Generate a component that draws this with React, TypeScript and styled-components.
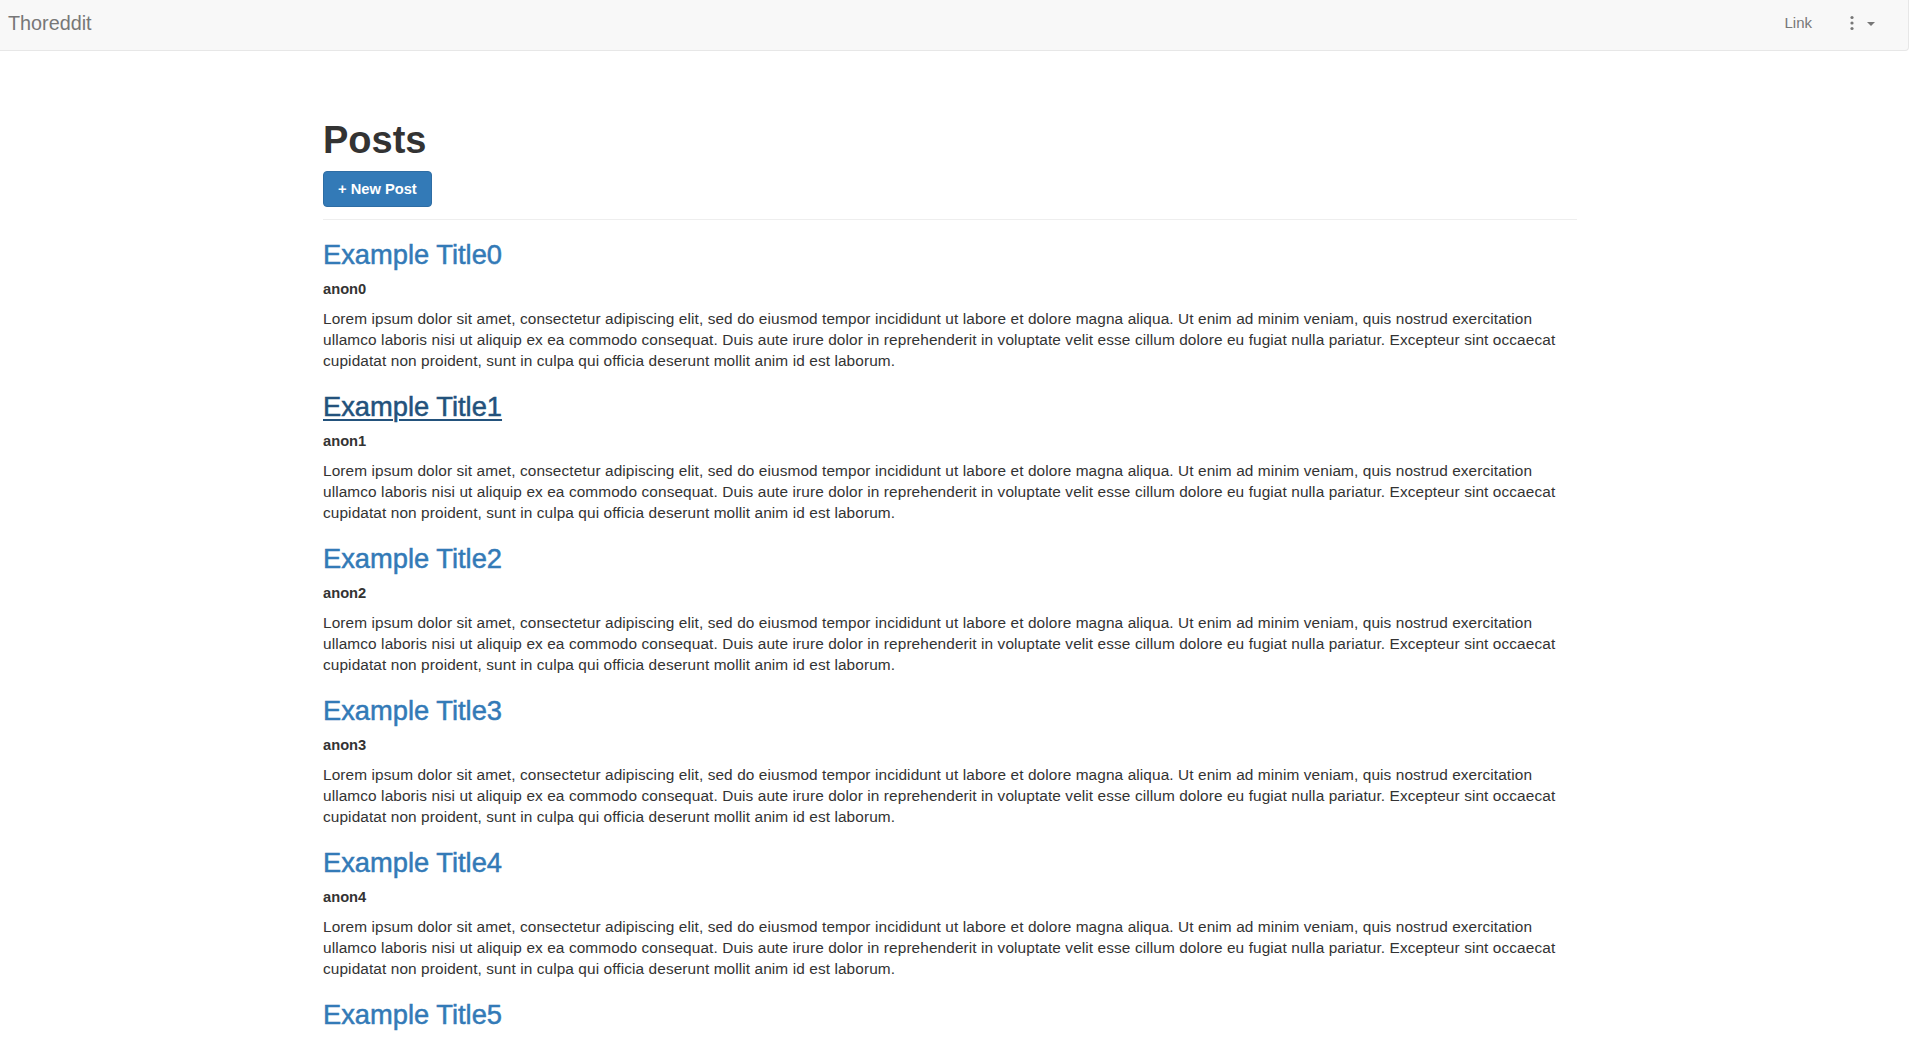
import React from "react";
import styled, { createGlobalStyle } from "styled-components";

const GlobalStyle = createGlobalStyle`
  html { scrollbar-width: none; }
  html::-webkit-scrollbar { display: none; }
  body {
    margin: 0;
    background: #fff;
    color: #333;
    font-family: "Liberation Sans", Helvetica, Arial, sans-serif;
    font-size: 15.4px;
    letter-spacing: 0.1px;
    line-height: 21px;
  }
  * { box-sizing: border-box; }
`;

const Navbar = styled.header`
  display: flex;
  align-items: center;
  justify-content: space-between;
  height: 51px;
  margin-right: 1px;
  padding: 0 15px 4px 8px;
  background: #f8f8f8;
  border-bottom: 1px solid #e7e7e7;
  border-right: 1px solid #e7e7e7;
  border-bottom-right-radius: 4px;
  letter-spacing: 0;
`;

const Brand = styled.a`
  color: #777;
  font-size: 19.8px;
  line-height: 20px;
  text-decoration: none;
`;

const NavRight = styled.nav`
  display: flex;
  align-items: center;
`;

const NavLink = styled.a`
  color: #777;
  font-size: 15px;
  line-height: 20px;
  padding: 0 15px;
  text-decoration: none;
`;

const DropdownToggle = styled.button`
  display: flex;
  align-items: center;
  gap: 12px;
  padding: 0 18px 0 22px;
  background: none;
  border: 0;
  color: #777;
  cursor: pointer;
`;

const Caret = styled.span`
  display: inline-block;
  width: 0;
  height: 0;
  margin-top: 2px;
  border-top: 4px solid #777;
  border-left: 4px solid transparent;
  border-right: 4px solid transparent;
`;

const Main = styled.main`
  padding: 68px 333px 40px 323px;
`;

const Heading = styled.h1`
  margin: 0;
  font-size: 38px;
  line-height: 42px;
  font-weight: 700;
  letter-spacing: 0;
  color: #333;
`;

const NewPostButton = styled.button`
  display: block;
  margin-top: 10px;
  height: 36px;
  padding: 0 14px;
  background: #337ab7;
  border: 1px solid #2e6da4;
  border-radius: 4px;
  color: #fff;
  font-family: inherit;
  font-size: 14.7px;
  font-weight: 700;
  line-height: 34px;
  cursor: pointer;
`;

const Divider = styled.hr`
  margin: 12px 0 20px;
  border: 0;
  border-top: 1px solid #eee;
`;

const PostList = styled.div`
  display: flex;
  flex-direction: column;
  gap: 21px;
`;

const Post = styled.article`
  display: flex;
  flex-direction: column;
`;

const PostTitle = styled.h3`
  margin: 0;
  font-size: 27.3px;
  line-height: 30px;
  font-weight: 400;
  letter-spacing: 0;
`;

const TitleLink = styled.a<{ $hover?: boolean }>`
  color: ${(p) => (p.$hover ? "#23527c" : "#337ab7")};
  text-decoration: ${(p) => (p.$hover ? "underline" : "none")};
  text-decoration-thickness: 2px;
  text-underline-offset: 3px;
  -webkit-text-stroke: 0.5px currentColor;
`;

const Author = styled.h5`
  margin: 9px 0 0;
  font-size: 14.7px;
  line-height: 21px;
  font-weight: 700;
  letter-spacing: 0;
`;

const Body = styled.p`
  margin: 8px 0 0;
`;

const LOREM =
  "Lorem ipsum dolor sit amet, consectetur adipiscing elit, sed do eiusmod tempor incididunt ut labore et dolore magna aliqua. Ut enim ad minim veniam, quis nostrud exercitation ullamco laboris nisi ut aliquip ex ea commodo consequat. Duis aute irure dolor in reprehenderit in voluptate velit esse cillum dolore eu fugiat nulla pariatur. Excepteur sint occaecat cupidatat non proident, sunt in culpa qui officia deserunt mollit anim id est laborum.";

const posts = Array.from({ length: 6 }, (_, i) => ({
  id: i,
  title: `Example Title${i}`,
  author: `anon${i}`,
  body: LOREM,
}));

const KebabIcon = () => (
  <svg width="6" height="16" viewBox="0 0 6 16" aria-hidden="true">
    <circle cx="3" cy="2.5" r="1.6" fill="#777" />
    <circle cx="3" cy="8" r="1.6" fill="#777" />
    <circle cx="3" cy="13.5" r="1.6" fill="#777" />
  </svg>
);

export default function App() {
  return (
    <>
      <GlobalStyle />
      <Navbar>
        <Brand href="#">Thoreddit</Brand>
        <NavRight>
          <NavLink href="#">Link</NavLink>
          <DropdownToggle type="button" aria-label="More">
            <KebabIcon />
            <Caret />
          </DropdownToggle>
        </NavRight>
      </Navbar>
      <Main>
        <Heading>Posts</Heading>
        <NewPostButton type="button">+ New Post</NewPostButton>
        <Divider />
        <PostList>
          {posts.map((p) => (
            <Post key={p.id}>
              <PostTitle>
                <TitleLink href="#" $hover={p.id === 1}>
                  {p.title}
                </TitleLink>
              </PostTitle>
              <Author>{p.author}</Author>
              <Body>{p.body}</Body>
            </Post>
          ))}
        </PostList>
      </Main>
    </>
  );
}
